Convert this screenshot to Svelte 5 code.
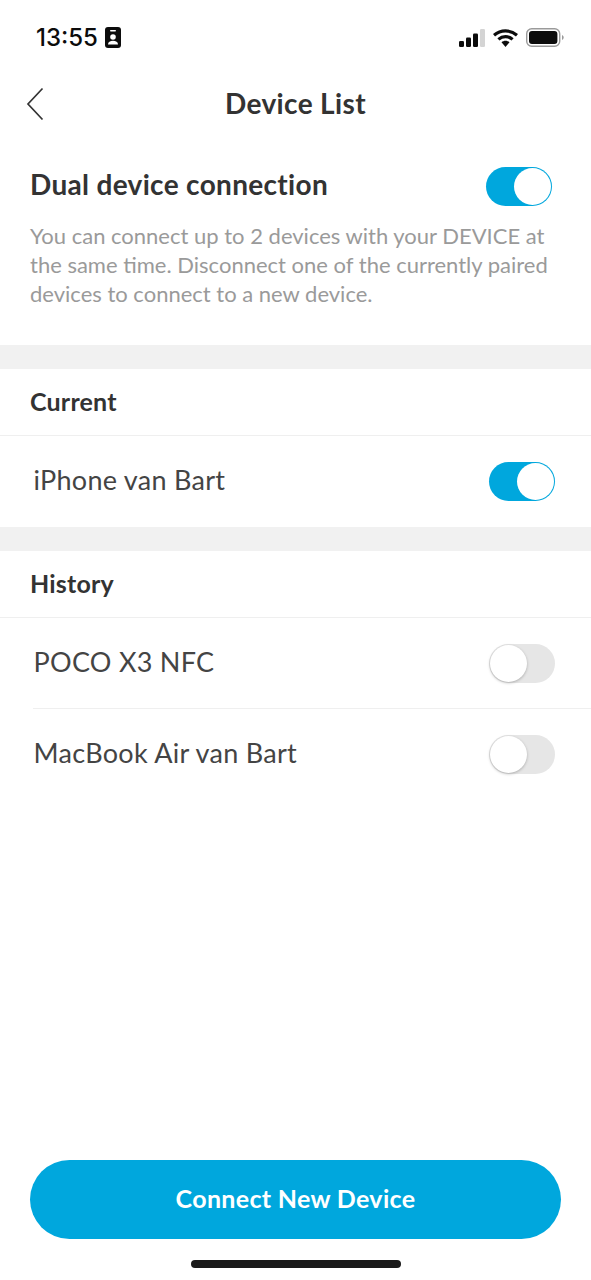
<script lang="ts">
  interface Device {
    name: string;
    on: boolean;
  }

  const current: Device[] = [{ name: 'iPhone van Bart', on: true }];
  const history: Device[] = [
    { name: 'POCO X3 NFC', on: false },
    { name: 'MacBook Air van Bart', on: false }
  ];
</script>

{#snippet toggle(on: boolean)}
  <span class="toggle" class:on><span class="knob"></span></span>
{/snippet}

<div class="page">
  <div class="status">
    <div class="status-left">
      <span class="time">13:55</span>
      <svg width="16" height="21" viewBox="0 0 16 21">
        <rect width="16" height="21" rx="3" fill="#0c0c0c" />
        <rect x="5" y="3" width="6" height="1.6" rx="0.8" fill="#fff" />
        <circle cx="8" cy="10" r="2.8" fill="#fff" />
        <path d="M3 17.5c0-2.6 2.200-3.700 5-3.700s5 1.100 5 3.700z" fill="#fff" />
      </svg>
    </div>
    <div class="status-right">
      <svg width="26" height="18" viewBox="0 0 26 18">
        <rect x="0" y="12" width="5" height="6" rx="1.300" fill="#0c0c0c" />
        <rect x="7" y="8.500" width="5" height="9.500" rx="1.300" fill="#0c0c0c" />
        <rect x="14" y="4.500" width="5" height="13.500" rx="1.300" fill="#0c0c0c" />
        <rect x="21" y="0" width="5" height="18" rx="1.300" fill="#d4d4d4" />
      </svg>
      <svg width="25" height="18" viewBox="0 0 25 18">
        <path d="M1 6.200C7.700.4 17.300.4 24 6.200" fill="none" stroke="#0c0c0c" stroke-width="3.200" />
        <path d="M5.400 10.400c4.200-3.600 10-3.600 14.200 0" fill="none" stroke="#0c0c0c" stroke-width="3.200" />
        <path d="M8.500 13.200c2.400-2 5.600-2 8 0L12.500 18z" fill="#0c0c0c" />
      </svg>
      <svg width="38" height="19" viewBox="0 0 38 19">
        <rect x="0.700" y="0.700" width="33" height="17.600" rx="5" fill="none" stroke="#9a9a9a" stroke-width="1.400" />
        <rect x="3" y="3" width="28.400" height="13" rx="3" fill="#0c0c0c" />
        <path d="M36 7v5c1-.4 1.700-1.400 1.700-2.500S37 7.400 36 7z" fill="#9a9a9a" />
      </svg>
    </div>
  </div>

  <header class="nav">
    <svg class="back" width="18" height="34" viewBox="0 0 18 34">
      <path d="M16.500 1.500 2 17l14.500 15.500" fill="none" stroke="#333" stroke-width="1.700" />
    </svg>
    <h1>Device List</h1>
  </header>

  <section class="dual">
    <div class="dual-head">
      <h2>Dual device connection</h2>
      {@render toggle(true)}
    </div>
    <p>You can connect up to 2 devices with your DEVICE at the same time. Disconnect one of the currently paired devices to connect to a new device.</p>
  </section>

  <div class="band"></div>
  <h3>Current</h3>
  <div class="list">
    {#each current as d}
      <div class="row">
        <span class="name">{d.name}</span>
        {@render toggle(d.on)}
      </div>
    {/each}
  </div>

  <div class="band"></div>
  <h3>History</h3>
  <div class="list">
    {#each history as d}
      <div class="row">
        <span class="name">{d.name}</span>
        {@render toggle(d.on)}
      </div>
    {/each}
  </div>

  <div class="footer">
    <button>Connect New Device</button>
    <div class="home"></div>
  </div>
</div>

<style>
  :global(body) {
    margin: 0;
    background: #fff;
  }

  .page {
    height: 1280px;
    display: flex;
    flex-direction: column;
    font-family: Lato, "Open Sans", sans-serif;
    color: #333;
    overflow: hidden;
  }

  .status {
    height: 76px;
    display: flex;
    justify-content: space-between;
    box-sizing: border-box;
    padding: 27px 27px 0 36px;
  }

  .status-left {
    display: flex;
    align-items: center;
    gap: 7px;
    height: 21px;
  }

  .time {
    font-family: Inter, "Liberation Sans", sans-serif;
    font-size: 24px;
    font-weight: 500;
    color: #0c0c0c;
  }

  .status-right {
    display: flex;
    align-items: center;
    gap: 8px;
    height: 21px;
  }

  .nav {
    height: 56px;
    box-sizing: border-box;
    padding-bottom: 3px;
    position: relative;
    display: flex;
    align-items: center;
    justify-content: center;
  }

  .back {
    position: absolute;
    left: 26px;
    top: 11px;
  }

  h1 {
    margin: 0;
    font-size: 28px;
    font-weight: 700;
    letter-spacing: 0.35px;
  }

  .dual {
    padding: 34px 39px 35px 30px;
    height: 213px;
    box-sizing: border-box;
  }

  .dual-head {
    display: flex;
    justify-content: space-between;
    align-items: center;
    height: 40px;
  }

  h2 {
    margin: 0 0 4px;
    font-size: 28px;
    font-weight: 700;
    letter-spacing: 0.32px;
  }

  .dual p {
    margin: 15px -20px 0 0;
    font-size: 22px;
    line-height: 29px;
    color: #9a9a9a;
  }

  .band {
    height: 24px;
    background: #f1f1f1;
  }

  h3 {
    margin: 0;
    height: 67px;
    box-sizing: border-box;
    padding-left: 30px;
    font-size: 25px;
    font-weight: 700;
    line-height: 64px;
    letter-spacing: 0.2px;
    border-bottom: 1px solid #efefef;
  }

  .list {
    display: flex;
    flex-direction: column;
  }

  .row {
    height: 91px;
    margin-left: 33px;
    padding-right: 36px;
    display: flex;
    align-items: center;
    justify-content: space-between;
    font-size: 27px;
    color: #444;
    border-bottom: 1px solid #efefef;
    box-sizing: border-box;
  }

  .row:last-child {
    border-bottom: none;
  }

  .name {
    margin: 0 0 4px 0.5px;
    letter-spacing: 0.28px;
  }

  .toggle {
    width: 66px;
    height: 39px;
    border-radius: 20px;
    background: #e6e6e6;
    display: flex;
    align-items: center;
    padding: 1px;
    box-sizing: border-box;
  }

  .toggle.on {
    background: #00a7dd;
    justify-content: flex-end;
  }

  .knob {
    width: 37px;
    height: 37px;
    border-radius: 50%;
    background: #fff;
    box-shadow: 0 1px 3px rgba(0, 0, 0, 0.25);
  }

  .toggle.on .knob {
    box-shadow: none;
  }

  .footer {
    margin-top: auto;
    display: flex;
    flex-direction: column;
    align-items: center;
  }

  button {
    width: 531px;
    height: 79px;
    padding: 0 0 4px;
    border: none;
    border-radius: 40px;
    background: #00a7dd;
    color: #fff;
    font-family: inherit;
    font-size: 25px;
    font-weight: 700;
    letter-spacing: 0.33px;
  }

  .home {
    width: 210px;
    height: 8px;
    margin: 21px 0 12px;
    border-radius: 4px;
    background: #1a1a1a;
  }
</style>
